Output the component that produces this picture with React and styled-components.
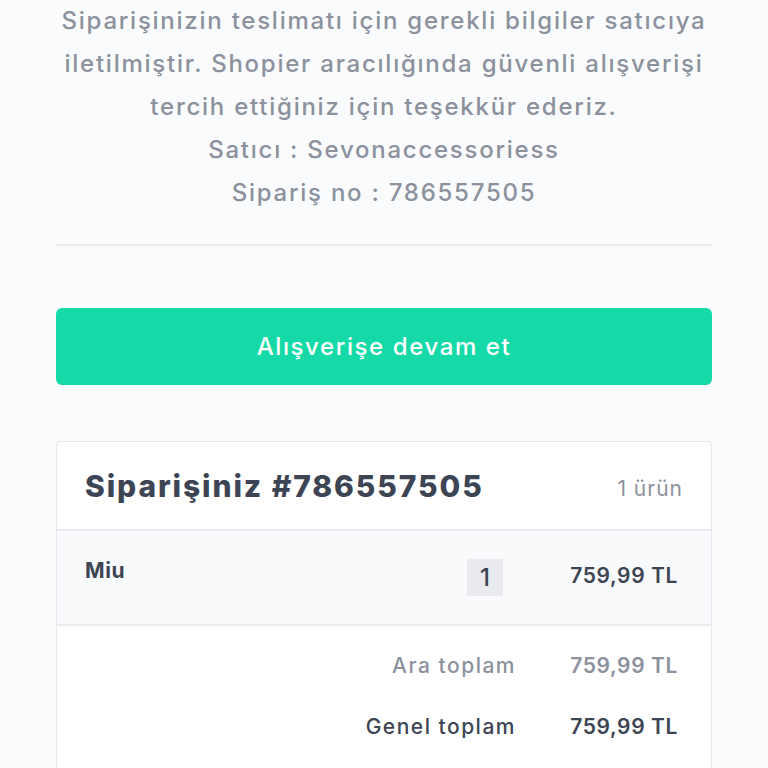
import styled, { createGlobalStyle } from "styled-components";

const Global = createGlobalStyle`
  body {
    margin: 0;
    background: #fafbfc;
    font-family: "Inter", "Noto Sans", sans-serif;
  }
`;

const Page = styled.div`
  width: 656px;
  margin: 0 auto;
`;

const Message = styled.div`
  margin-top: -1px;
  text-align: center;
  color: #8b919d;
  font-size: 24px;
  font-weight: 500;
  line-height: 43px;
  letter-spacing: 1.75px;
  padding-bottom: 30px;
  border-bottom: 2px solid #e9eaec;
`;

const Button = styled.button`
  display: block;
  width: 100%;
  height: 77px;
  margin-top: 62px;
  border: none;
  border-radius: 6px;
  background: #16d9a8;
  color: #fff;
  font-family: inherit;
  font-size: 24px;
  font-weight: 500;
  letter-spacing: 1.6px;
`;

const Card = styled.div`
  margin-top: 56px;
  background: #fff;
  border: 1px solid #e8e9ec;
  border-radius: 4px;
`;

const CardHead = styled.div`
  height: 87px;
  display: flex;
  align-items: center;
  justify-content: space-between;
  padding: 0 28px;
  border-bottom: 2px solid #eaebee;
`;

const Title = styled.h2`
  margin: 0;
  font-size: 30px;
  font-weight: 800;
  letter-spacing: 1.9px;
  color: #3d4454;
`;

const Count = styled.span`
  font-size: 21px;
  color: #8b919d;
  letter-spacing: 1px;
  padding-top: 5px;
`;

const ItemRow = styled.div`
  height: 93px;
  background: #f9fafb;
  display: flex;
  align-items: flex-start;
  padding: 0 33px 0 28px;
  border-bottom: 2px solid #eaebee;
`;

const ItemName = styled.span`
  flex: 1;
  margin-top: 27px;
  font-size: 21px;
  font-weight: 700;
  letter-spacing: 0.6px;
  color: #3d4454;
`;

const Qty = styled.span`
  width: 36px;
  height: 37px;
  margin-top: 28px;
  margin-right: 13px;
  display: flex;
  align-items: center;
  justify-content: center;
  background: #e9ebef;
  font-size: 24px;
  font-weight: 500;
  color: #3d4454;
`;

const Amount = styled.span`
  width: 162px;
  text-align: right;
  margin-top: ${(p) => p.$top || 0}px;
  font-size: 21px;
  font-weight: 600;
  letter-spacing: 0.6px;
  color: ${(p) => (p.$muted ? "#8b919d" : "#3d4454")};
`;

const Totals = styled.div`
  padding: 26px 33px 30px 28px;
  display: flex;
  flex-direction: column;
  gap: 33px;
`;

const TotalRow = styled.div`
  display: flex;
  justify-content: flex-end;
  align-items: center;
  line-height: 28px;
`;

const Label = styled.span`
  font-size: 21px;
  font-weight: 500;
  letter-spacing: 1.5px;
  color: ${(p) => (p.$muted ? "#8b919d" : "#3d4454")};
`;

export default function App() {
  return (
    <Page>
      <Global />
      <Message>
        Siparişinizin teslimatı için gerekli bilgiler satıcıya
        <br />
        iletilmiştir. Shopier aracılığında güvenli alışverişi
        <br />
        tercih ettiğiniz için teşekkür ederiz.
        <br />
        Satıcı : Sevonaccessoriess
        <br />
        Sipariş no : 786557505
      </Message>
      <Button>Alışverişe devam et</Button>
      <Card>
        <CardHead>
          <Title>Siparişiniz #786557505</Title>
          <Count>1 ürün</Count>
        </CardHead>
        <ItemRow>
          <ItemName>Miu</ItemName>
          <Qty>1</Qty>
          <Amount $top={32}>759,99 TL</Amount>
        </ItemRow>
        <Totals>
          <TotalRow>
            <Label $muted>Ara toplam</Label>
            <Amount $muted>759,99 TL</Amount>
          </TotalRow>
          <TotalRow>
            <Label>Genel toplam</Label>
            <Amount>759,99 TL</Amount>
          </TotalRow>
        </Totals>
      </Card>
    </Page>
  );
}
